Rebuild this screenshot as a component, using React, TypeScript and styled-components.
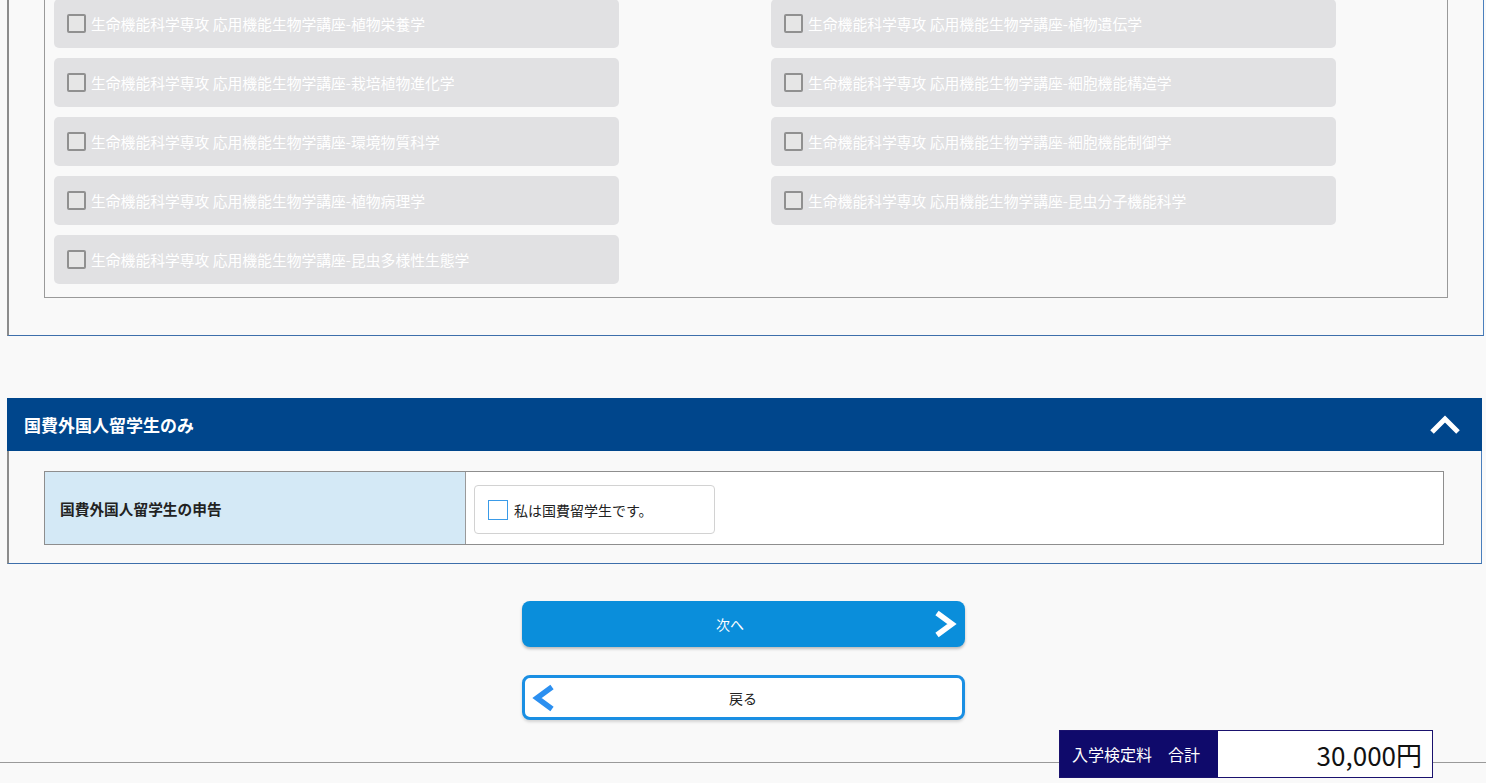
import React, { FC } from 'react';
import styled, { createGlobalStyle } from 'styled-components';

const GlobalStyle = createGlobalStyle`
  html, body {
    margin: 0;
    padding: 0;
    background: #f9f9f9;
    font-family: "Noto Sans CJK JP", "Noto Sans", sans-serif;
    color: #222;
  }
  body {
    overflow: hidden;
    height: 783px;
  }
`;

const courses: [string, string | null][] = [
  ['植物栄養学', '植物遺伝学'],
  ['栽培植物進化学', '細胞機能構造学'],
  ['環境物質科学', '細胞機能制御学'],
  ['植物病理学', '昆虫分子機能科学'],
  ['昆虫多様性生態学', null],
];

const prefix = '生命機能科学専攻 応用機能生物学講座-';

const ChevronUp: FC = () => (
  <svg width="32" height="20" viewBox="0 0 32 20">
    <path d="M3 17L16 4L29 17" fill="none" stroke="#fff" strokeWidth="5" strokeLinejoin="miter" />
  </svg>
);

const ChevronRight: FC<{ color: string }> = ({ color }) => (
  <svg width="24" height="28" viewBox="0 0 24 28">
    <path d="M4 3L19 14L4 25" fill="none" stroke={color} strokeWidth="5.5" />
  </svg>
);

const ChevronLeft: FC<{ color: string }> = ({ color }) => (
  <svg width="24" height="28" viewBox="0 0 24 28">
    <path d="M20 3L5 14L20 25" fill="none" stroke={color} strokeWidth="5.5" />
  </svg>
);

const App: FC = () => (
  <>
    <GlobalStyle />
    <Page>
      <Panel>
        <CourseBox>
          <CourseGrid>
            {courses.map(([left, right], i) => (
              <React.Fragment key={i}>
                <CourseItem>
                  <GrayBox />
                  <span>{prefix + left}</span>
                </CourseItem>
                {right ? (
                  <CourseItem>
                    <GrayBox />
                    <span>{prefix + right}</span>
                  </CourseItem>
                ) : (
                  <div />
                )}
              </React.Fragment>
            ))}
          </CourseGrid>
        </CourseBox>
      </Panel>

      <Section>
        <SectionHeader>
          <SectionTitle>国費外国人留学生のみ</SectionTitle>
          <ChevronUp />
        </SectionHeader>
        <SectionBody>
          <Table>
            <LabelCell>国費外国人留学生の申告</LabelCell>
            <ValueCell>
              <CheckLabel>
                <BlueBox />
                <span>私は国費留学生です。</span>
              </CheckLabel>
            </ValueCell>
          </Table>
        </SectionBody>
      </Section>

      <Buttons>
        <NextButton>
          <span>次へ</span>
          <IconRight>
            <ChevronRight color="#fff" />
          </IconRight>
        </NextButton>
        <BackButton>
          <IconLeft>
            <ChevronLeft color="#2b8ff0" />
          </IconLeft>
          <span>戻る</span>
        </BackButton>
      </Buttons>

      <FooterLine />
    </Page>
    <FeeBox>
      <FeeLabel>入学検定料　合計</FeeLabel>
      <FeeValue>30,000円</FeeValue>
    </FeeBox>
  </>
);

export default App;

const Page = styled.div`
  margin-top: -1px;
  padding: 0 2px 0 7px;
  display: flex;
  flex-direction: column;
`;

const Panel = styled.div`
  border-left: 2px solid #8c8c8c;
  border-right: 1px solid #4a7fbd;
  border-bottom: 1px solid #3d6fab;
  padding: 0 35px 37px 35px;
`;

const CourseBox = styled.div`
  border: 1px solid #9a9a9a;
  border-top: none;
  padding: 0 0 13px 9px;
`;

const CourseGrid = styled.div`
  display: grid;
  grid-template-columns: 565px 565px;
  column-gap: 152px;
  row-gap: 10px;
`;

const CourseItem = styled.div`
  height: 49px;
  background: #e1e1e3;
  border-radius: 5px;
  display: flex;
  align-items: center;
  gap: 5px;
  padding-left: 13px;
  color: #fff;
  font-size: 14.8px;
  white-space: nowrap;
`;

const GrayBox = styled.span`
  width: 19px;
  height: 19px;
  box-sizing: border-box;
  border: 2px solid #909090;
  border-radius: 2px;
  background: #e6e6e6;
  flex-shrink: 0;
`;

const Section = styled.div`
  margin-top: 62px;
  margin-right: 2px;
`;

const SectionHeader = styled.div`
  height: 53px;
  background: #00468c;
  display: flex;
  align-items: center;
  justify-content: space-between;
  padding: 0 21px 0 17px;
  box-sizing: border-box;
`;

const SectionTitle = styled.div`
  color: #fff;
  font-size: 17px;
  font-weight: bold;
`;

const SectionBody = styled.div`
  border-left: 2px solid #8c8c8c;
  border-right: 1px solid #4a7fbd;
  border-bottom: 1px solid #3d6fab;
  padding: 20px 37px 18px 35px;
`;

const Table = styled.div`
  display: grid;
  grid-template-columns: 421px 1fr;
  height: 74px;
  box-sizing: border-box;
  border: 1px solid #8e8e8e;
`;

const LabelCell = styled.div`
  background: #d4e9f6;
  border-right: 1px solid #9a9a9a;
  display: flex;
  align-items: center;
  padding-left: 15px;
  font-size: 14.7px;
  font-weight: bold;
  color: #222;
`;

const ValueCell = styled.div`
  background: #fff;
  display: flex;
  align-items: center;
  padding: 3px 0 0 8px;
`;

const CheckLabel = styled.div`
  width: 241px;
  height: 49px;
  box-sizing: border-box;
  border: 1px solid #d2d2d2;
  border-radius: 4px;
  display: flex;
  align-items: center;
  gap: 6px;
  padding-left: 13px;
  font-size: 14px;
  color: #222;
`;

const BlueBox = styled.span`
  width: 20px;
  height: 20px;
  box-sizing: border-box;
  border: 1.5px solid #3a9be8;
  background: #fff;
`;

const Buttons = styled.div`
  margin-top: 37px;
  display: flex;
  flex-direction: column;
  align-items: center;
  gap: 29px;
  padding-right: 5px;
`;

const ButtonBase = styled.div`
  width: 443px;
  box-sizing: border-box;
  border-radius: 8px;
  display: flex;
  align-items: center;
  justify-content: center;
  position: relative;
  font-size: 14px;
`;

const NextButton = styled(ButtonBase)`
  height: 46px;
  background: #0a8edb;
  color: #fff;
  padding-right: 26px;
  box-shadow: 0 2px 3px rgba(0, 0, 0, 0.25);
`;

const BackButton = styled(ButtonBase)`
  height: 45px;
  margin-top: -1px;
  background: #fff;
  border: 3px solid #1a8fe3;
  color: #222;
  box-shadow: 0 2px 3px rgba(0, 0, 0, 0.15);
`;

const IconRight = styled.span`
  position: absolute;
  right: 8px;
  top: 50%;
  transform: translateY(-50%);
  display: flex;
`;

const IconLeft = styled.span`
  position: absolute;
  left: 7px;
  top: 50%;
  transform: translateY(-50%);
  display: flex;
`;

const FooterLine = styled.div`
  margin: 42px -2px 0 -7px;
  border-top: 1px solid #9a9a9a;
`;

const FeeBox = styled.div`
  position: absolute;
  left: 1059px;
  top: 730px;
  width: 374px;
  height: 48px;
  box-sizing: border-box;
  border: 1px solid #1a126e;
  display: flex;
`;

const FeeLabel = styled.div`
  width: 158px;
  background: #0f0a6b;
  color: #fff;
  font-size: 16px;
  display: flex;
  align-items: center;
  padding-left: 12px;
  box-sizing: border-box;
  white-space: nowrap;
`;

const FeeValue = styled.div`
  flex: 1;
  background: #fff;
  color: #111;
  font-size: 26px;
  display: flex;
  align-items: center;
  justify-content: flex-end;
  padding-right: 10px;
`;
